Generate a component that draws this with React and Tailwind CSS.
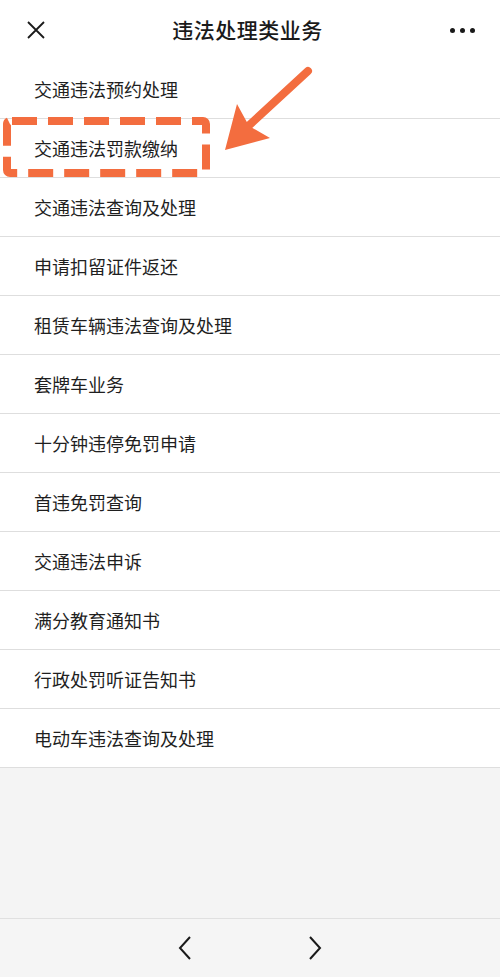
import React from "react";

const items = [
  "交通违法预约处理",
  "交通违法罚款缴纳",
  "交通违法查询及处理",
  "申请扣留证件返还",
  "租赁车辆违法查询及处理",
  "套牌车业务",
  "十分钟违停免罚申请",
  "首违免罚查询",
  "交通违法申诉",
  "满分教育通知书",
  "行政处罚听证告知书",
  "电动车违法查询及处理",
];

export default function App() {
  return (
    <div
      className="relative w-[500px] h-[977px] flex flex-col bg-[#f4f4f4] overflow-hidden"
      style={{ fontFamily: '"Noto Sans CJK SC", "Noto Sans", sans-serif' }}
    >
      <div className="h-[60px] shrink-0 bg-white flex items-center justify-between px-[26px]">
        <svg width="18" height="18" viewBox="0 0 18 18" className="ml-[1px]">
          <path d="M1 1 L17 17 M17 1 L1 17" stroke="#1a1a1a" strokeWidth="1.8" />
        </svg>
        <div className="text-[21px] font-medium text-[#1a1a1a] tracking-[0.5px]">违法处理类业务</div>
        <div className="flex gap-[5px] items-center mr-[-1px]">
          <span className="w-[5px] h-[5px] rounded-full bg-[#1a1a1a]" />
          <span className="w-[5px] h-[5px] rounded-full bg-[#1a1a1a]" />
          <span className="w-[5px] h-[5px] rounded-full bg-[#1a1a1a]" />
        </div>
      </div>
      <div className="flex flex-col bg-white">
        {items.map((t) => (
          <div
            key={t}
            className="h-[59px] border-b border-[#dedede] flex items-center pl-[34px] text-[18px] text-[#1f1f1f]"
          >
            {t}
          </div>
        ))}
      </div>
      <div className="flex-1" />
      <div className="h-[59px] shrink-0 border-t border-[#e0e0e0] bg-[#f5f5f5] flex items-center justify-center gap-[116px]">
        <svg width="14" height="24" viewBox="0 0 14 24">
          <path d="M12 1 L2 12 L12 23" fill="none" stroke="#1a1a1a" strokeWidth="2" />
        </svg>
        <svg width="14" height="24" viewBox="0 0 14 24">
          <path d="M2 1 L12 12 L2 23" fill="none" stroke="#1a1a1a" strokeWidth="2" />
        </svg>
      </div>
      <svg
        className="absolute left-0 top-0 pointer-events-none"
        width="500"
        height="200"
        viewBox="0 0 500 200"
      >
        <rect
          x="7"
          y="121"
          width="199"
          height="52"
          rx="3"
          fill="none"
          stroke="#f36d3f"
          strokeWidth="8"
          strokeDasharray="25 11"
          strokeDashoffset="-2"
          strokeLinejoin="round"
        />
        <line x1="308" y1="71" x2="244" y2="130" stroke="#f36d3f" strokeWidth="8" strokeLinecap="round" />
        <polygon points="225,150 237,104 249,126 270,138" fill="#f36d3f" />
      </svg>
    </div>
  );
}
